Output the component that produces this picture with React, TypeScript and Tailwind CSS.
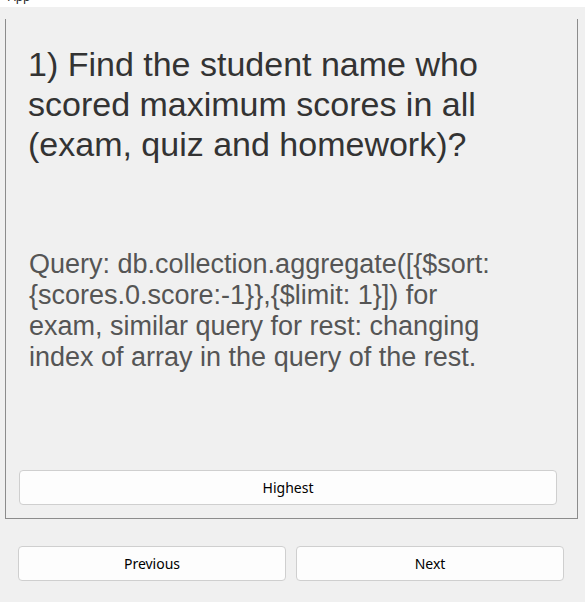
import React from 'react';

const App: React.FC = () => {
  return (
    <div className="w-[585px] h-[602px] bg-[#f0f0f0] flex flex-col overflow-hidden">
      {/* window title strip, mostly cut off */}
      <div className="h-[7px] bg-white overflow-hidden shrink-0">
        <div className="mt-[-10px] ml-[8px] text-[12px] leading-[14px] text-[#222] font-['Noto_Sans',sans-serif]">App</div>
      </div>

      <div className="h-[12px] shrink-0" />

      {/* question frame */}
      <div className="mx-[5px] w-[573px] h-[500px] border-l border-r border-b border-[#8c8c8c] border-t-white flex flex-col shrink-0">
        <div className="pl-[22px] pr-[52px] pt-[25px] text-[34px] leading-[40px] text-[#333333] font-['Liberation_Sans',Arial,sans-serif]">
          1) Find the student name who scored maximum scores in all (exam, quiz and homework)?
        </div>

        <div className="pl-[23px] pr-[70px] mt-[85px] text-[27px] leading-[31px] text-[#555555] font-['Liberation_Sans',Arial,sans-serif]">
          Query: db.collection.aggregate([{'{'}$sort: {'{'}scores.0.score:-1{'}}'},{'{'}$limit: 1{'}'}]) for exam, similar query for rest: changing index of array in the query of the rest.
        </div>

        <div className="flex-1" />

        <button className="ml-[13px] mr-[20px] mb-[13px] h-[35px] bg-[#fdfdfd] border border-[#cfcfcf] rounded-[4px] text-[14px] text-black font-['Noto_Sans',sans-serif]">
          Highest
        </button>
      </div>

      <div className="flex gap-[10px] pl-[18px] pr-[21px] mt-[27px]">
        <button className="w-[268px] h-[35px] bg-[#fdfdfd] border border-[#cfcfcf] rounded-[4px] text-[14px] text-black font-['Noto_Sans',sans-serif]">
          Previous
        </button>
        <button className="w-[268px] h-[35px] bg-[#fdfdfd] border border-[#cfcfcf] rounded-[4px] text-[14px] text-black font-['Noto_Sans',sans-serif]">
          Next
        </button>
      </div>
    </div>
  );
};

export default App;
